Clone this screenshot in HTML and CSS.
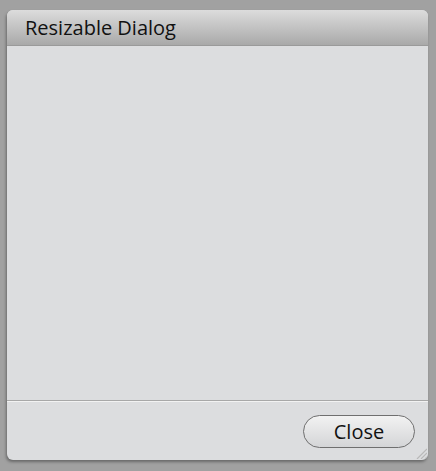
FILE: index.html
```html
<!DOCTYPE html>
<html>
<head>
<meta charset="utf-8">
<link rel="stylesheet" href="styles.css">
</head>
<body>
<div class="dialog">
  <div class="titlebar"><span class="title">Resizable Dialog</span></div>
  <div class="content"></div>
  <div class="footer">
    <button class="btn">Close</button>
  </div>
  <svg class="grip" width="12" height="12" viewBox="0 0 12 12">
    <line x1="2" y1="12" x2="12" y2="2" stroke="#b8b8b8" stroke-width="1.2"/>
    <line x1="6" y1="12" x2="12" y2="6" stroke="#b8b8b8" stroke-width="1.2"/>
    <line x1="10" y1="12" x2="12" y2="10" stroke="#b8b8b8" stroke-width="1.2"/>
  </svg>
</div>
</body>
</html>
```
FILE: styles.css
```css
html, body {
  margin: 0;
  padding: 0;
  background: #a1a1a1;
  width: 436px;
  height: 471px;
  overflow: hidden;
  font-family: "Open Sans", "Noto Sans", sans-serif;
}
body {
  padding: 10px 8px 11px 7px;
  box-sizing: border-box;
}
.dialog {
  position: relative;
  width: 421px;
  height: 450px;
  background: #dcdddf;
  border-radius: 6px;
  box-shadow: -1px 2px 3px rgba(0,0,0,0.35);
  display: flex;
  flex-direction: column;
  overflow: hidden;
}
.titlebar {
  height: 36px;
  background: linear-gradient(#dcdcdc, #a9a9a9);
  border-bottom: 1px solid #9a9a9a;
  display: flex;
  align-items: center;
  padding-left: 18px;
  box-sizing: border-box;
}
.title {
  font-size: 20px;
  color: #111;
  letter-spacing: 0;
}
.content {
  flex: 1;
  border-bottom: 1px solid #a8a8a8;
  box-shadow: 0 1px 0 #f2f2f2;
}
.footer {
  height: 59px;
  display: flex;
  justify-content: flex-end;
  align-items: flex-start;
  padding: 14px 13px 0 0;
  box-sizing: border-box;
}
.btn {
  width: 112px;
  height: 33px;
  border-radius: 17px;
  border: 1px solid #6f6f6f;
  background: linear-gradient(#f2f2f2, #d4d5d7);
  font-family: "Open Sans", "Noto Sans", sans-serif;
  font-size: 20px;
  color: #111;
  padding: 0;
  line-height: 31px;
}
.grip {
  position: absolute;
  right: 1px;
  bottom: 1px;
}
```
